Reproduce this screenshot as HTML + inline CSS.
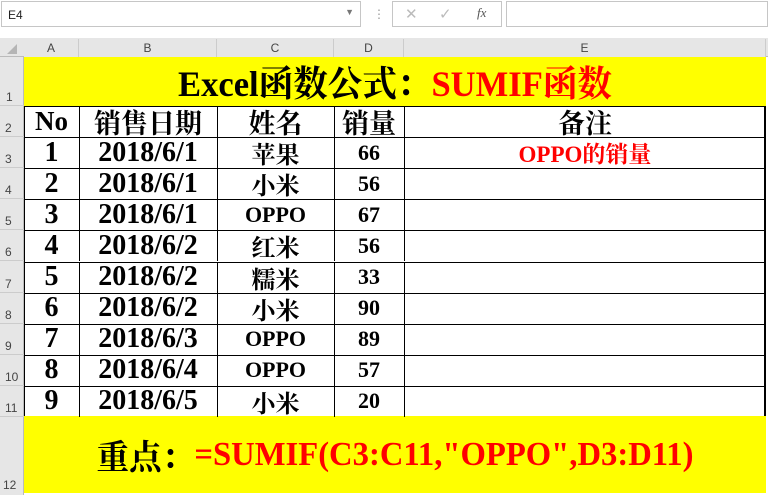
<!DOCTYPE html><html><head><meta charset="utf-8"><style>
body{margin:0;width:768px;height:495px;background:#fff;position:relative;overflow:hidden;font-family:"Liberation Serif","Noto Serif CJK SC",serif}
.a{position:absolute;box-sizing:border-box}
.hd{font-family:"Liberation Sans",sans-serif;font-size:12px;color:#444;background:#e6e6e6}
.c{position:absolute;display:flex;align-items:center;justify-content:center;font-weight:bold;color:#000;white-space:nowrap;font-family:"Liberation Serif","Noto Serif CJK SC",serif}
</style></head><body>
<div class="a" style="left:0;top:0;width:768px;height:38px;background:#fff"></div>
<div class="a" style="left:1px;top:1px;width:360px;height:26px;border:1px solid #c6c6c6;font-family:'Liberation Sans';font-size:12px;padding:6px 6px;color:#222">E4<span style="position:absolute;right:6px;top:5px;color:#777;font-size:9px">▼</span></div>
<div class="a" style="left:373px;top:7px;color:#999;font-size:12px">⋮</div>
<div class="a" style="left:392px;top:1px;width:110px;height:26px;border:1px solid #c6c6c6;color:#bbb;font-family:'Liberation Sans';font-size:15px"><span style="position:absolute;left:12px;top:3px">✕</span><span style="position:absolute;left:46px;top:3px">✓</span><span style="position:absolute;left:84px;top:3px;color:#555;font-style:italic;font-family:'Liberation Serif';font-size:13px">fx</span></div>
<div class="a" style="left:506px;top:1px;width:262px;height:26px;border:1px solid #c6c6c6"></div>
<div class="a hd" style="left:0;top:38px;width:768px;height:19px;border-bottom:1px solid #bbb"></div>
<div class="a hd" style="left:0;top:57px;width:24px;height:438px;border-right:1px solid #bbb"></div>
<div class="a" style="left:7px;top:44px;width:0;height:0;border-left:10px solid transparent;border-bottom:10px solid #b5b5b5"></div>
<div class="a hd" style="left:24px;top:39px;width:55px;height:18px;text-align:center;line-height:18px;border-right:1px solid #ccc">A</div>
<div class="a hd" style="left:79px;top:39px;width:138px;height:18px;text-align:center;line-height:18px;border-right:1px solid #ccc">B</div>
<div class="a hd" style="left:217px;top:39px;width:117px;height:18px;text-align:center;line-height:18px;border-right:1px solid #ccc">C</div>
<div class="a hd" style="left:334px;top:39px;width:70px;height:18px;text-align:center;line-height:18px;border-right:1px solid #ccc">D</div>
<div class="a hd" style="left:404px;top:39px;width:362px;height:18px;text-align:center;line-height:18px;border-right:1px solid #ccc">E</div>
<div class="a hd" style="left:0;top:57px;width:24px;height:49px;background:none;border-bottom:1px solid #ccc"><span style="position:absolute;left:6px;bottom:1px">1</span></div>
<div class="a" style="left:24px;top:57px;width:742px;height:49px;background:#ff0"></div>
<div class="c" style="left:24px;top:57px;width:742px;height:49px;font-size:36px;transform:scaleX(0.96)">Excel函数公式：<span style="color:#f00">SUMIF函数</span></div>
<div class="a" style="left:24px;top:106px;width:742px;height:311px;border:1px solid #000;border-right-width:2px"></div>
<div class="a" style="left:24px;top:416px;width:742px;height:77px;background:#ff0"></div>
<div class="c" style="left:24px;top:416px;width:742px;height:77px;font-size:34px;transform:scaleX(0.96)">重点：<span style="color:#f00">=SUMIF(C3:C11,"OPPO",D3:D11)</span></div>
<div id="g"></div>
<script>
var rows=[["No","销售日期","姓名","销量","备注"],["1","2018/6/1","苹果","66","OPPO的销量"],["2","2018/6/1","小米","56",""],["3","2018/6/1","OPPO","67",""],["4","2018/6/2","红米","56",""],["5","2018/6/2","糯米","33",""],["6","2018/6/2","小米","90",""],["7","2018/6/3","OPPO","89",""],["8","2018/6/4","OPPO","57",""],["9","2018/6/5","小米","20",""]];
var xs=[24,79,217,334,404,766],h="";
for(var r=0;r<10;r++){var y=106+r*31.1;
h+='<div class="a hd" style="left:0;top:'+y+'px;width:24px;height:31px;background:none;border-bottom:1px solid #ccc"><span style="position:absolute;left:5px;bottom:1px">'+(r+2)+'</span></div>';
if(r>0)h+='<div class="a" style="left:24px;top:'+y+'px;width:742px;height:1px;background:#000"></div>';
for(var c=0;c<5;c++){var fs=r==0?27:(c==2?(rows[r][c]=="OPPO"?22:24):(c==3?22:(c==4?23:28)));var col=(c==4&&r==1)?'#f00':'#000';
if(c>0)h+='<div class="a" style="left:'+xs[c]+'px;top:'+y+'px;width:1px;height:31px;background:#000"></div>';
h+='<div class="c" style="left:'+xs[c]+'px;top:'+y+'px;width:'+(xs[c+1]-xs[c])+'px;height:31px;font-size:'+fs+'px;color:'+col+'">'+rows[r][c]+'</div>';}}
h+='<div class="a hd" style="left:0;top:416px;width:24px;height:77px;background:none"><span style="position:absolute;left:3px;bottom:1px">12</span></div>';
document.getElementById('g').innerHTML=h;
</script>
</body></html>
